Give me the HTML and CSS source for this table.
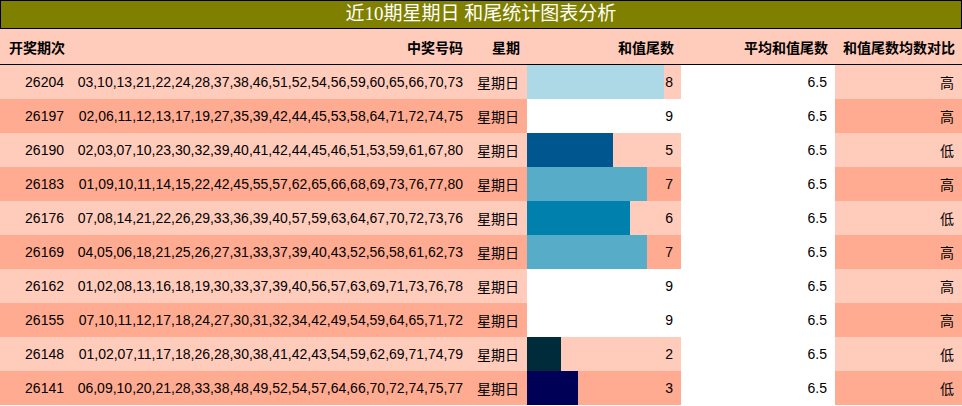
FILE: index.html
```html
<!DOCTYPE html>
<html lang="zh">
<head>
<meta charset="utf-8">
<link rel="stylesheet" href="styles.css">
</head>
<body>
<div class="title">近10期星期日 和尾统计图表分析</div>
<table class="grid">
  <colgroup>
    <col class="c1"><col class="c2"><col class="c3"><col class="c4"><col class="c5"><col class="c6">
  </colgroup>
  <thead>
    <tr>
      <th class="left">开奖期次</th>
      <th class="nums">中奖号码</th>
      <th>星期</th>
      <th>和值尾数</th>
      <th>平均和值尾数</th>
      <th>和值尾数均数对比</th>
    </tr>
  </thead>
  <tbody>
    <tr class="odd"><td>26204</td><td class="nums">03,10,13,21,22,24,28,37,38,46,51,52,54,56,59,60,65,66,70,73</td><td>星期日</td><td class="bar" style="--w:88.9%;--c:#add8e6">8</td><td class="avg">6.5</td><td>高</td></tr>
    <tr class="even"><td>26197</td><td class="nums">02,06,11,12,13,17,19,27,35,39,42,44,45,53,58,64,71,72,74,75</td><td>星期日</td><td class="bar" style="--w:100%;--c:#ffffff">9</td><td class="avg">6.5</td><td>高</td></tr>
    <tr class="odd"><td>26190</td><td class="nums">02,03,07,10,23,30,32,39,40,41,42,44,45,46,51,53,59,61,67,80</td><td>星期日</td><td class="bar" style="--w:55.6%;--c:#00568f">5</td><td class="avg">6.5</td><td>低</td></tr>
    <tr class="even"><td>26183</td><td class="nums">01,09,10,11,14,15,22,42,45,55,57,62,65,66,68,69,73,76,77,80</td><td>星期日</td><td class="bar" style="--w:77.8%;--c:#57acc8">7</td><td class="avg">6.5</td><td>高</td></tr>
    <tr class="odd"><td>26176</td><td class="nums">07,08,14,21,22,26,29,33,36,39,40,57,59,63,64,67,70,72,73,76</td><td>星期日</td><td class="bar" style="--w:66.7%;--c:#0080ad">6</td><td class="avg">6.5</td><td>低</td></tr>
    <tr class="even"><td>26169</td><td class="nums">04,05,06,18,21,25,26,27,31,33,37,39,40,43,52,56,58,61,62,73</td><td>星期日</td><td class="bar" style="--w:77.8%;--c:#57acc8">7</td><td class="avg">6.5</td><td>高</td></tr>
    <tr class="odd"><td>26162</td><td class="nums">01,02,08,13,16,18,19,30,33,37,39,40,56,57,63,69,71,73,76,78</td><td>星期日</td><td class="bar" style="--w:100%;--c:#ffffff">9</td><td class="avg">6.5</td><td>高</td></tr>
    <tr class="even"><td>26155</td><td class="nums">07,10,11,12,17,18,24,27,30,31,32,34,42,49,54,59,64,65,71,72</td><td>星期日</td><td class="bar" style="--w:100%;--c:#ffffff">9</td><td class="avg">6.5</td><td>高</td></tr>
    <tr class="odd"><td>26148</td><td class="nums">01,02,07,11,17,18,26,28,30,38,41,42,43,54,59,62,69,71,74,79</td><td>星期日</td><td class="bar" style="--w:22.2%;--c:#002b3a">2</td><td class="avg">6.5</td><td>低</td></tr>
    <tr class="even"><td>26141</td><td class="nums">06,09,10,20,21,28,33,38,48,49,52,54,57,64,66,70,72,74,75,77</td><td>星期日</td><td class="bar" style="--w:33.3%;--c:#000056">3</td><td class="avg">6.5</td><td>低</td></tr>
  </tbody>
</table>
</body>
</html>
```

FILE: styles.css
```css
html, body {
  margin: 0;
  padding: 0;
  background: #ffffff;
}
body {
  width: 962px;
  font-family: "Liberation Sans", "Noto Sans CJK SC", sans-serif;
  font-size: 14px;
  color: #000000;
}
.title {
  box-sizing: border-box;
  height: 29px;
  border: 1px solid #000000;
  background: #808000;
  color: #ffffff;
  font-family: "Liberation Serif", "Noto Sans CJK SC", serif;
  font-size: 19px;
  line-height: 26px;
  text-align: center;
}
.grid {
  width: 962px;
  border-collapse: collapse;
  border-spacing: 0;
  table-layout: fixed;
}
.c1 { width: 70px; }
.c2 { width: 400px; }
.c3 { width: 57px; }
.c4 { width: 154px; }
.c5 { width: 154px; }
.c6 { width: 127px; }
.grid th {
  height: 35px;
  padding: 0 7px 0 0;
  background: #ffcbbb;
  font-weight: bold;
  text-align: right;
  border-bottom: 1px solid #000000;
  vertical-align: middle;
  white-space: nowrap;
}
.grid th.left {
  text-align: left;
  padding-left: 9px;
}
.grid td {
  height: 34px;
  padding: 0 8px 0 0;
  text-align: right;
  vertical-align: middle;
  white-space: nowrap;
}
.grid .nums { padding-right: 7px; }
.odd td { background-color: #ffcbbb; }
.even td { background-color: #ffab91; }
.grid td:first-child { padding-right: 6px; }
.grid td.bar {
  background-image: linear-gradient(90deg, var(--c) var(--w), transparent var(--w));
}
.grid td.avg { background-color: #ffffff; }
```
